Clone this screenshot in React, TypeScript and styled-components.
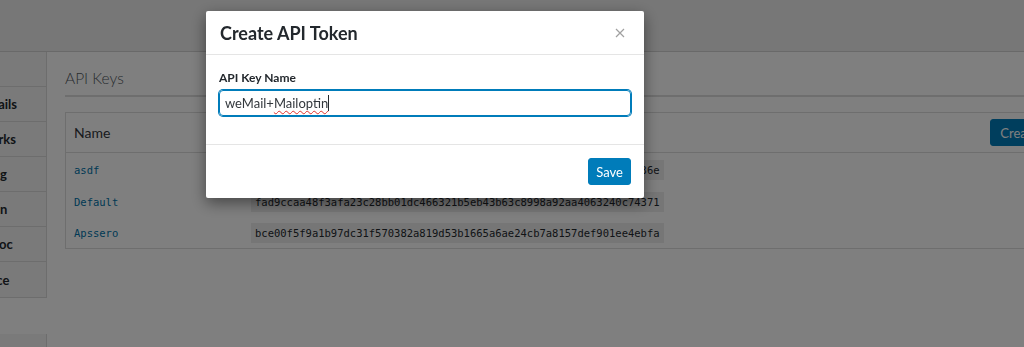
import React from "react";
import styled, { createGlobalStyle } from "styled-components";

const GlobalStyle = createGlobalStyle`
  html, body { margin: 0; padding: 0; }
  body {
    width: 1024px;
    height: 347px;
    overflow: hidden;
    background: #fff;
    font-family: Lato, "Noto Sans", sans-serif;
    color: #23282d;
  }
`;

const Page = styled.div`
  width: 1200px;
  display: flex;
  flex-direction: column;
`;

const TopBar = styled.div`
  height: 51px;
  background: #eeeeee;
  border-bottom: 1px solid #d2d2d2;
`;

const Main = styled.div`
  display: flex;
  align-items: flex-start;
`;

const Sidebar = styled.nav`
  width: 160px;
  margin-left: -113px;
  display: flex;
  flex-direction: column;
  gap: 36px;
`;

const NavList = styled.ul`
  list-style: none;
  margin: 0;
  padding: 0;
  background: #f5f5f5;
  border-right: 1px solid #dadada;
  border-bottom: 1px solid #dadada;
`;

const NavItem = styled.li<{ $indent: number }>`
  height: 35px;
  box-sizing: border-box;
  border-bottom: 1px solid #dadada;
  padding-left: ${(p) => p.$indent}px;
  display: flex;
  align-items: center;
  font-size: 13px;
  font-weight: 700;
  color: #23282d;
  white-space: nowrap;
  &:last-child { border-bottom: none; }
`;

const Content = styled.section`
  width: 1052px;
  padding: 16px 0 0 18px;
`;

const Heading = styled.h2`
  margin: 0;
  padding: 0 0 7px;
  font-size: 15.5px;
  font-weight: 300;
  line-height: 20px;
  color: #50575e;
  border-bottom: 2px solid #dcdcdc;
`;

const TableCard = styled.table`
  margin-top: 15px;
  width: 100%;
  border-collapse: collapse;
  border: 1px solid #dcdcdc;
  background: #fff;
`;

const HeadCell = styled.th`
  height: 39px;
  padding: 0 8px;
  text-align: left;
  font-size: 14px;
  font-weight: 400;
  color: #32373c;
  border-bottom: 1px solid #dcdcdc;
`;

const ActionCell = styled(HeadCell)`
  text-align: right;
`;

const Row = styled.tr`
  height: 32px;
`;

const Cell = styled.td`
  padding: 0 8px;
  vertical-align: middle;
  line-height: 16px;
  &:first-child { width: 161px; }
`;

const KeyName = styled.a`
  font-family: "DejaVu Sans Mono", "Liberation Mono", monospace;
  font-size: 10.5px;
  color: #0073aa;
  text-decoration: none;
`;

const Code = styled.code`
  font-family: "DejaVu Sans Mono", "Liberation Mono", monospace;
  font-size: 10.5px;
  color: #23282d;
  background: rgba(0, 0, 0, 0.07);
  padding: 4px 4px;
`;

const PrimaryButton = styled.button<{ $pad?: number }>`
  height: 27px;
  padding: 0 ${(p) => p.$pad ?? 9}px;
  border: 1px solid #007cba;
  border-radius: 3px;
  background: #007cba;
  color: #fff;
  font-family: Lato, "Noto Sans", sans-serif;
  font-size: 13px;
  cursor: pointer;
`;

const Backdrop = styled.div`
  position: fixed;
  inset: 0;
  background: rgba(0, 0, 0, 0.5);
  padding: 11px 0 0 206px;
`;

const Dialog = styled.div`
  width: 438px;
  background: #fff;
  border-radius: 2px;
  box-shadow: 0 5px 15px rgba(0, 0, 0, 0.45);
`;

const DialogHeader = styled.div`
  height: 44px;
  box-sizing: border-box;
  padding: 0 14px;
  display: flex;
  align-items: center;
  justify-content: space-between;
  border-bottom: 1px solid #e5e5e5;
`;

const DialogTitle = styled.h3`
  margin: 0;
  font-size: 18px;
  font-weight: 700;
  color: #23282d;
`;

const CloseButton = styled.button`
  width: 14px;
  height: 14px;
  padding: 0;
  margin-right: 3px;
  border: none;
  background: none;
  display: flex;
  align-items: center;
  justify-content: center;
  cursor: pointer;
`;

const DialogBody = styled.div`
  padding: 15px 13px 28px;
  border-bottom: 1px solid #e5e5e5;
`;

const Label = styled.label`
  display: block;
  font-size: 12px;
  font-weight: 700;
  line-height: 16px;
  color: #23282d;
  margin-bottom: 4px;
`;

const TextBox = styled.div`
  height: 26px;
  box-sizing: border-box;
  border: 1px solid #007cba;
  box-shadow: 0 0 0 1px #007cba;
  border-radius: 4px;
  padding: 0 5px;
  display: flex;
  align-items: center;
  font-size: 13px;
  color: #32373c;
  white-space: pre;
`;

const Misspelled = styled.span`
  text-decoration: underline wavy #e0302a;
  text-decoration-thickness: 1px;
  text-underline-offset: 2px;
`;

const Caret = styled.span`
  display: inline-block;
  width: 1px;
  height: 16px;
  background: #23282d;
`;

const DialogFooter = styled.div`
  height: 53px;
  padding: 0 13px;
  display: flex;
  align-items: center;
  justify-content: flex-end;
`;

const navTop = [
  { label: "General", indent: 10 },
  { label: "Company Details", indent: 32 },
  { label: "Social Networks", indent: 35 },
  { label: "Email Sending", indent: 39 },
  { label: "Double Opt-in", indent: 37 },
  { label: "REST API Doc", indent: 45 },
  { label: "Maintenance", indent: 47 },
];

const keys = [
  { name: "asdf", key: "9c1d0e3b7a55f2c48e6a1b9d03f7c2e5a84b16d9e0f3c7a2b58d41e6f09ac36e" },
  { name: "Default", key: "fad9ccaa48f3afa23c28bb01dc466321b5eb43b63c8998a92aa4063240c74371" },
  { name: "Apssero", key: "bce00f5f9a1b97dc31f570382a819d53b1665a6ae24cb7a8157def901ee4ebfa" },
];

export default function App() {
  return (
    <>
      <GlobalStyle />
      <Page>
        <TopBar />
        <Main>
          <Sidebar>
            <NavList>
              {navTop.map((n) => (
                <NavItem key={n.label} $indent={n.indent}>
                  {n.label}
                </NavItem>
              ))}
            </NavList>
            <NavList>
              <NavItem $indent={10}>Tools</NavItem>
            </NavList>
          </Sidebar>
          <Content>
            <Heading>API Keys</Heading>
            <TableCard>
              <thead>
                <tr>
                  <HeadCell>Name</HeadCell>
                  <HeadCell />
                  <ActionCell>
                    <PrimaryButton>Create API Token</PrimaryButton>
                  </ActionCell>
                </tr>
              </thead>
              <tbody>
                {keys.map((k) => (
                  <Row key={k.name}>
                    <Cell>
                      <KeyName href="#">{k.name}</KeyName>
                    </Cell>
                    <Cell>
                      <Code>{k.key}</Code>
                    </Cell>
                    <Cell />
                  </Row>
                ))}
              </tbody>
            </TableCard>
          </Content>
        </Main>
      </Page>
      <Backdrop>
        <Dialog role="dialog" aria-label="Create API Token">
          <DialogHeader>
            <DialogTitle>Create API Token</DialogTitle>
            <CloseButton aria-label="Close">
              <svg width="10" height="10" viewBox="0 0 10 10">
                <path d="M1 1L9 9M9 1L1 9" stroke="#a0a0a0" strokeWidth="1.2" />
              </svg>
            </CloseButton>
          </DialogHeader>
          <DialogBody>
            <Label>API Key Name</Label>
            <TextBox role="textbox">
              weMail+<Misspelled>Mailoptin</Misspelled>
              <Caret />
            </TextBox>
          </DialogBody>
          <DialogFooter>
            <PrimaryButton $pad={7}>Save</PrimaryButton>
          </DialogFooter>
        </Dialog>
      </Backdrop>
    </>
  );
}
